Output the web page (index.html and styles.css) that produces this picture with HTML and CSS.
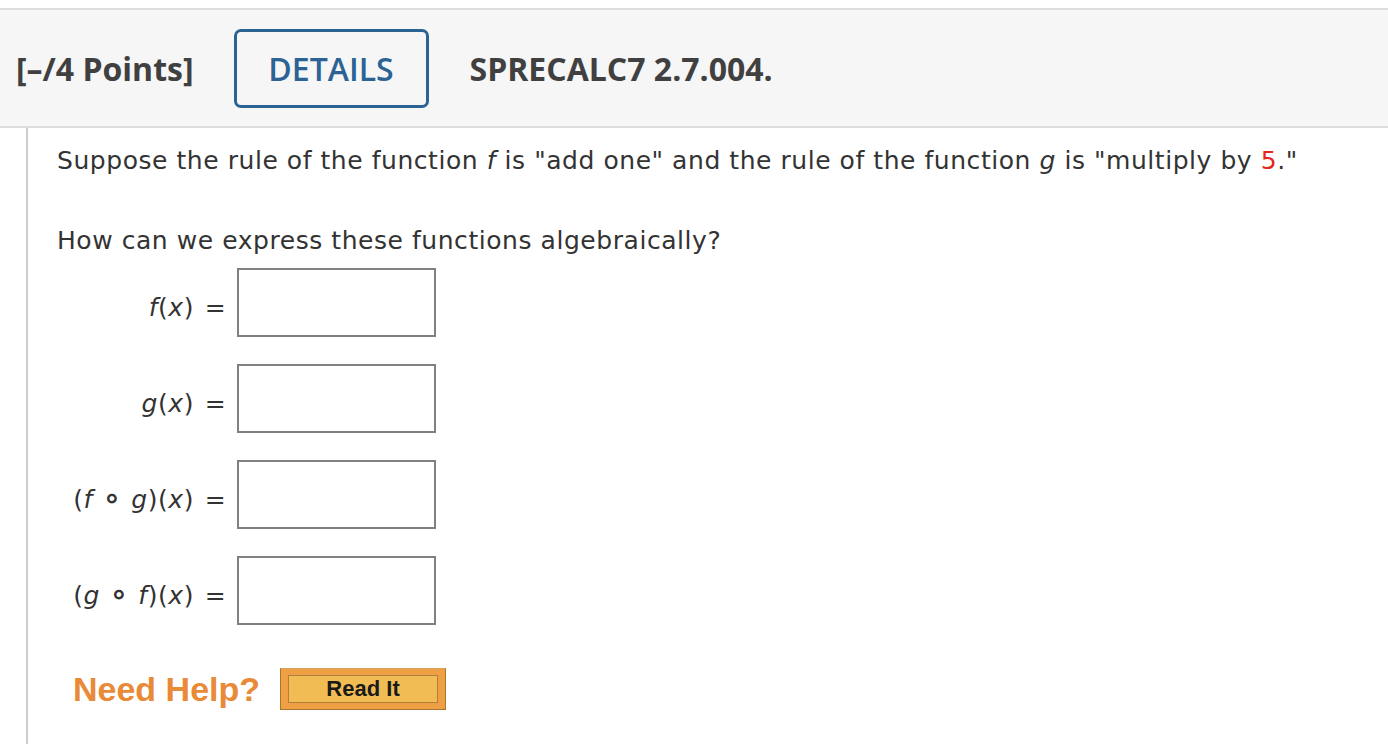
FILE: index.html
```html
<!DOCTYPE html>
<html>
<head>
<meta charset="utf-8">
<link rel="stylesheet" href="styles.css">
</head>
<body>
<div class="page">
  <div class="header">
    <span class="points">[–/4 Points]</span>
    <span class="details-btn">DETAILS</span>
    <span class="code">SPRECALC7 2.7.004.</span>
  </div>
  <div class="content">
    <p class="text">Suppose the rule of the function <i>f</i> is "add one" and the rule of the function <i>g</i> is "multiply by <span class="red">5</span>."</p>
    <p class="text q">How can we express these functions algebraically?</p>
    <div class="rows">
      <div class="row"><span class="label"><i>f</i>(<i>x</i>)</span><span class="eq">=</span><span class="box"></span></div>
      <div class="row"><span class="label"><i>g</i>(<i>x</i>)</span><span class="eq">=</span><span class="box"></span></div>
      <div class="row"><span class="label">(<i>f</i> <span class="circ">∘</span> <i>g</i>)(<i>x</i>)</span><span class="eq">=</span><span class="box"></span></div>
      <div class="row"><span class="label">(<i>g</i> <span class="circ">∘</span> <i>f</i>)(<i>x</i>)</span><span class="eq">=</span><span class="box"></span></div>
    </div>
    <div class="help">
      <span class="need">Need Help?</span>
      <span class="readit"><span class="readit-inner">Read It</span></span>
    </div>
  </div>
</div>
</body>
</html>
```
FILE: styles.css
```css
html, body {
  margin: 0;
  padding: 0;
  background: #fff;
}
.page {
  padding-top: 8px;
  height: 736px;
  display: flex;
  flex-direction: column;
}
.header {
  border-top: 2px solid #dedede;
  border-bottom: 2px solid #dedede;
  background: #f6f6f6;
  height: 116px;
  display: flex;
  align-items: center;
  padding-left: 16px;
  font-family: "Open Sans", sans-serif;
  color: #404040;
}
.points {
  font-weight: 700;
  font-size: 32px;
}
.details-btn {
  margin-left: 40px;
  box-sizing: border-box;
  width: 195px;
  height: 79px;
  border: 3px solid #2b6394;
  border-radius: 7px;
  display: flex;
  align-items: center;
  justify-content: center;
  color: #2b6394;
  font-size: 32px;
  font-weight: 600;
  margin-top: 1px;
}
.code {
  margin-left: 41px;
  font-weight: 700;
  font-size: 32px;
}
.content {
  flex: 1;
  margin-left: 26px;
  border-left: 2px solid #cccccc;
  padding-left: 29px;
  font-family: "DejaVu Sans", Verdana, sans-serif;
  color: #333;
  font-size: 25px;
  letter-spacing: 0.55px;
}
.text {
  margin: 0;
  line-height: 30px;
}
.text:first-child {
  margin-top: 18px;
}
.q {
  margin-top: 50px;
}
.red {
  color: #e4251b;
}
.rows {
  margin-top: 12px;
  display: flex;
  flex-direction: column;
  gap: 28px;
}
.row {
  display: flex;
  align-items: center;
  height: 68px;
}
.label {
  width: 137px;
  text-align: right;
  padding-top: 10px;
  white-space: nowrap;
}
.circ {
  font-style: normal;
  font-weight: 700;
  font-size: 30px;
  line-height: 0;
  margin: 0 1px;
}
.eq {
  width: 43px;
  text-align: center;
  padding-top: 10px;
}
.box {
  box-sizing: border-box;
  width: 199px;
  height: 69px;
  border: 2px solid #808080;
  background: #fff;
}
.help {
  margin-top: 44px;
  display: flex;
  align-items: center;
  margin-left: 16px;
}
.need {
  font-family: "Liberation Sans", Arial, sans-serif;
  font-weight: 700;
  font-size: 34px;
  letter-spacing: 0;
  color: #e98a38;
}
.readit {
  margin-left: 20px;
  box-sizing: border-box;
  width: 166px;
  height: 42px;
  border: 1px solid #a8742e;
  border-top-color: #d9a35e;
  background: #f0a044;
  padding: 6px 7px;
  display: flex;
}
.readit-inner {
  flex: 1;
  border: 1px solid #b0803a;
  background: #f2bc55;
  display: flex;
  align-items: center;
  justify-content: center;
  font-family: "Liberation Sans", Arial, sans-serif;
  font-weight: 700;
  font-size: 22px;
  letter-spacing: 0;
  color: #1a1a1a;
}
```
